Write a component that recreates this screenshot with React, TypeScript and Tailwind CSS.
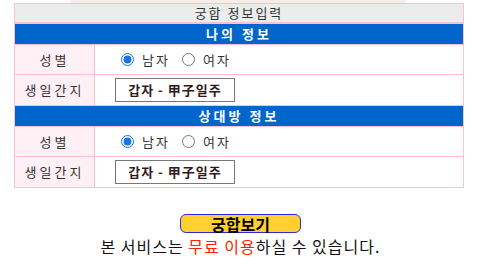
import React, { useState } from 'react';

const font = { fontFamily: '"Noto Sans CJK KR", "Noto Sans", sans-serif' };

interface SectionProps {
  title: string;
  name: string;
  ganji: string;
}

const Section: React.FC<SectionProps> = ({ title, name, ganji }) => {
  const [gender, setGender] = useState('m');
  return (
    <>
      <div className="h-[21px] bg-[#0066cc] text-white text-[13px] font-bold flex items-center justify-center tracking-[3px] border-b border-[#ffc0cb]">
        {title}
      </div>
      <div className="flex h-[30px] border-b border-[#ffc0cb]">
        <div className="w-[80px] bg-[#fff0f5] border-r border-[#ffc0cb] flex items-center justify-center text-[13px] text-[#333] tracking-[3px]">
          성별
        </div>
        <div className="flex-1 flex items-center pl-[26px] text-[13px] text-[#333]">
          <label className="flex items-center tracking-[2px]">
            <input
              type="radio"
              name={name}
              checked={gender === 'm'}
              onChange={() => setGender('m')}
              className="w-[13px] h-[13px] m-0 mr-[8px] accent-[#1a73e8]"
            />
            남자
          </label>
          <label className="flex items-center ml-[12px] tracking-[2px]">
            <input
              type="radio"
              name={name}
              checked={gender === 'f'}
              onChange={() => setGender('f')}
              className="w-[13px] h-[13px] m-0 mr-[8px] accent-[#1a73e8]"
            />
            여자
          </label>
        </div>
      </div>
      <div className="flex h-[30px]">
        <div className="w-[80px] bg-[#fff0f5] border-r border-[#ffc0cb] flex items-center justify-center text-[13px] text-[#333] tracking-[3px]">
          생일간지
        </div>
        <div className="flex-1 flex items-center pl-[20px]">
          <div className="w-[120px] h-[24px] border border-[#777] flex items-center justify-center text-[13px] font-bold text-[#331a1a] tracking-[1px]">
            {ganji}
          </div>
        </div>
      </div>
    </>
  );
};

export default function App() {
  return (
    <div className="w-[481px] h-[274px] bg-white relative" style={font}>
      <div className="ml-[71px] w-[335px] h-[3px] bg-[#f3eee8]" />
      <div className="ml-[14px] w-[450px] border border-[#ffc0cb]">
        <div className="h-[20px] bg-[#ececec] flex items-center justify-center text-[13px] text-[#333] tracking-[2px] border-b-2 border-[#ffc0cb]">
          궁합 정보입력
        </div>
        <Section title="나의 정보" name="g1" ganji="갑자 - 甲子일주" />
        <div className="border-t border-[#ffc0cb]" />
        <Section title="상대방 정보" name="g2" ganji="갑자 - 甲子일주" />
      </div>
      <div className="flex flex-col items-center mt-[26px]">
        <button className="w-[121px] h-[19px] bg-[#ffd02f] border border-[#2b2bd9] rounded-[6px] text-[16px] font-bold text-black leading-none flex items-center justify-center">
          궁합보기
        </button>
        <p className="text-[16px] text-[#111] leading-[20px] mt-[3px] tracking-[1px]">
          본 서비스는 <span className="text-[#ff2200]">무료 이용</span>하실 수 있습니다.
        </p>
      </div>
    </div>
  );
}
